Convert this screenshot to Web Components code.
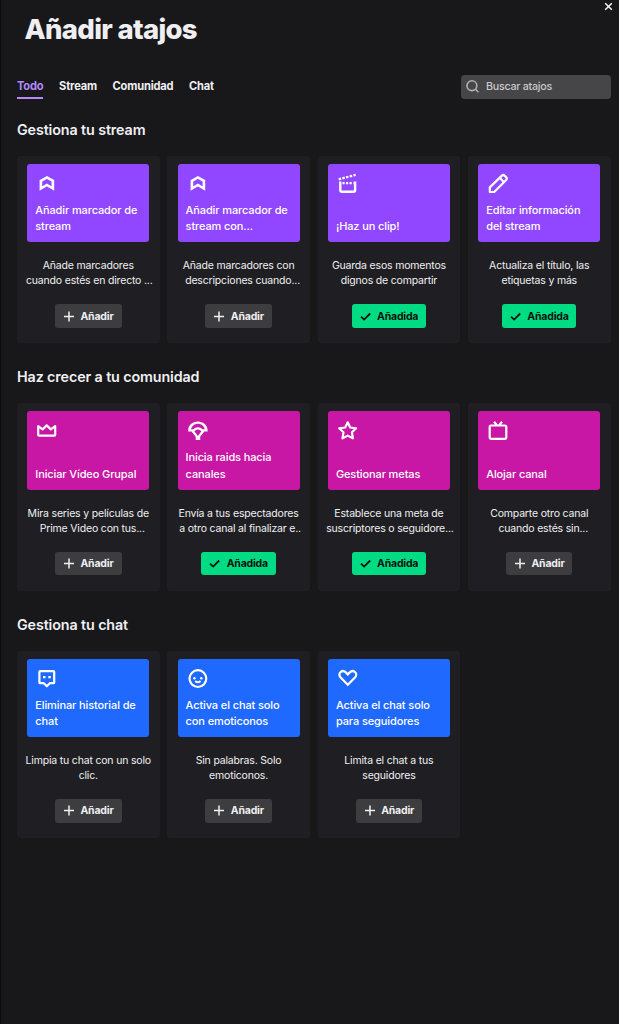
<!DOCTYPE html>
<html lang="es">
<head>
<meta charset="utf-8">
<title>Añadir atajos</title>
<style>
html,body{margin:0;background:#18181b}
body{font-family:Inter,"Liberation Sans",sans-serif;color:#efeff1;height:1024px;overflow:hidden}
</style>
</head>
<body>
<shortcut-dialog>
  <dialog-tabs slot="tabs"></dialog-tabs>
  <search-box slot="search"></search-box>
  <shortcut-section heading="Gestiona tu stream" style="--tile:#9147ff">
    <shortcut-card icon="bookmark" name="Añadir marcador de|stream" text="Añade marcadores|cuando estés en directo ..." style="--shift:2px"></shortcut-card>
    <shortcut-card icon="bookmark" name="Añadir marcador de|stream con..." text="Añade marcadores con|descripciones cuando..." style="--shift:8px"></shortcut-card>
    <shortcut-card icon="clip" name="¡Haz un clip!" text="Guarda esos momentos|dignos de compartir" added></shortcut-card>
    <shortcut-card icon="pencil" name="Editar información|del stream" text="Actualiza el título, las|etiquetas y más" added></shortcut-card>
  </shortcut-section>
  <shortcut-section heading="Haz crecer a tu comunidad" style="--tile:#c816a5">
    <shortcut-card icon="crown" name="Iniciar Vídeo Grupal" text="Mira series y películas de|Prime Video con tus..." style="--shift:8px"></shortcut-card>
    <shortcut-card icon="raid" name="Inicia raids hacia|canales" text="Envía a tus espectadores|a otro canal al finalizar e.." added style="--shift:3px"></shortcut-card>
    <shortcut-card icon="star" name="Gestionar metas" text="Establece una meta de|suscriptores o seguidore..." added style="--shift:2px"></shortcut-card>
    <shortcut-card icon="tv" name="Alojar canal" text="Comparte otro canal|cuando estés sin..." style="--shift:8px"></shortcut-card>
  </shortcut-section>
  <shortcut-section heading="Gestiona tu chat" style="--tile:#1f69ff">
    <shortcut-card icon="chat" name="Eliminar historial de|chat" text="Limpia tu chat con un solo|clic."></shortcut-card>
    <shortcut-card icon="smile" name="Activa el chat solo|con emoticonos" text="Sin palabras. Solo|emoticonos."></shortcut-card>
    <shortcut-card icon="heart" name="Activa el chat solo|para seguidores" text="Limita el chat a tus|seguidores"></shortcut-card>
  </shortcut-section>
</shortcut-dialog>
<script>
const S = 'fill="none" stroke="#fff"';
const ICONS = {
  bookmark: `<path ${S} stroke-width="2.600" d="M3.900 7.800 9.900 4.400 15.900 7.800v7.700l-6-3.500-6 3.500z"/>`,
  clip: `<path ${S} stroke-width="2.400" d="M2.300 8.500v9.100q0 1.200 1.200 1.200h12.400q1.200 0 1.200-1.200V8.500"/><path ${S} stroke-width="2.200" stroke-dasharray="2.200 1.300" d="M4.500 10.100h11"/><path ${S} stroke-width="2.300" stroke-dasharray="2.500 1.300" d="M.7 6.300 17.600 1.900"/>`,
  pencil: `<path ${S} stroke-linejoin="round" d="M1.800 19v-4.600L13.900 2.600q1.300-1.200 2.600 0l1.700 1.700q1.200 1.300 0 2.600L6.200 19z"/><path ${S} d="m11.600 4.800 4.500 4.500"/>`,
  crown: `<path ${S} stroke-linejoin="round" d="M1.200 6.100v8.600q0 .9.900.9h15.200q.9 0 .9-.9V6.100l-4.400 3.300-4.100-4-4.100 4z"/>`,
  raid: `<path fill="#fff" fill-rule="evenodd" d="M.2 11.600V10.400C.2 5 4.400 1.400 9.900 1.400s9.700 3.600 9.700 9v1.200h-3.300l-4.100 5.200V20H7.700v-3.200L3.500 11.600zM3 9.200h2.200Q7 7.300 9.900 7.300t4.700 1.900h2.200C15.900 5.800 13.200 3.700 9.900 3.700S3.900 5.800 3 9.200zM6.400 11.200 9.900 16l3.500-4.800Q11.900 9.600 9.900 9.600T6.400 11.200z"/>`,
  star: `<path ${S} stroke-linejoin="round" d="m9.700 2.300 2.500 5.200 6 .8-4.300 4 1 6.100-5.200-2.800-5.200 2.800 1-6.100-4.300-4 6-.8z"/>`,
  tv: `<path ${S} d="M2.900 5.500h13.900q1.500 0 1.500 1.500v10.300q0 1.500-1.500 1.500H2.900q-1.200 0-1.200-1.500V7q0-1.500 1.200-1.500zM6.100 1.800l3 3.600M14 1.800l-3 3.600"/>`,
  chat: `<path ${S} stroke-linejoin="round" d="M3.200 3.100h13.200q.8 0 .8.800v10.500q0 .8-.8.800h-3.600l-3 3.100-3-3.100H3.200q-.8 0-.8-.8V3.900q0-.8.800-.8z"/><path fill="#fff" d="M6 7.900h2.500v2.400H6zm5.300 0h2.500v2.400h-2.500z"/>`,
  smile: `<circle cx="9.900" cy="10.600" r="8.400" ${S}/><circle cx="6.400" cy="10.300" r="1.250" fill="#fff"/><circle cx="13.300" cy="10.300" r="1.250" fill="#fff"/><path ${S} stroke-width="2" d="M7.200 13q2.700 2.500 5.400 0"/>`,
  heart: `<path ${S} d="M9.800 16.800 2.600 9.500C.9 7.700 1 5.300 2.600 4c1.600-1.400 3.700-1.100 5.200.4l2 2 2-2c1.500-1.500 3.600-1.800 5.200-.4C18.600 5.300 18.700 7.700 17 9.500z"/>`
};
const PLUS = '<svg width="11" height="11" viewBox="0 0 11 11"><path d="M6 .5v10M1 5.500h10" stroke="currentColor" stroke-width="1.500"/></svg>';
const CHECK = '<svg width="11" height="11" viewBox="0 0 11 11"><path d="m1 5.700 3.100 2.900L10.200 2.500" fill="none" stroke="currentColor" stroke-width="1.800"/></svg>';
class Base extends HTMLElement {
  connectedCallback(){ if(!this.shadowRoot) this.attachShadow({mode:'open'}).innerHTML=this.view(); }
}
customElements.define('shortcut-dialog', class extends Base { view(){ return `<style>
:host{display:block;position:relative;box-sizing:border-box;height:1024px;padding:13px 8.500px 0 17px;background:linear-gradient(90deg,#0c0c0e 1.500px,transparent 1.500px)}
h1{margin:0 0 0 7.500px;font-size:27.500px;line-height:33px;font-weight:760;letter-spacing:-.68px;white-space:nowrap}
.bar{display:flex;justify-content:space-between;margin-top:29px;height:24px}
main{display:flex;flex-direction:column;gap:25px;margin-top:22px}
.close{position:absolute;right:6px;top:2px;width:9px;height:9px}
</style><h1>Añadir atajos</h1><svg class="close" viewBox="0 0 9 9"><path d="m1.200 1.200 6.600 6.600m0-6.600L1.200 7.800" stroke="#efeff1" stroke-width="1.600"/></svg>
<div class="bar"><slot name="tabs"></slot><slot name="search"></slot></div><main><slot></slot></main>`}});
customElements.define('dialog-tabs', class extends Base { view(){ return `<style>
:host{display:flex;gap:15.700px;font-size:11.100px;line-height:16px;font-weight:650;letter-spacing:-.18px;height:24px}
span{padding-top:3px;height:19px;white-space:nowrap}
.on{color:#b588ff;border-bottom:2px solid #b588ff}
</style><span class="on">Todo</span><span>Stream</span><span>Comunidad</span><span>Chat</span>`}});
customElements.define('search-box', class extends Base { view(){ return `<style>
:host{display:flex;align-items:center;box-sizing:border-box;width:149.500px;height:23.500px;padding-left:5px;gap:7px;border-radius:4px;background:#464649;color:#c8c8cc;font-size:10.700px;font-weight:450;letter-spacing:-.25px}
svg{flex:none;width:13px;height:13px}
</style><svg viewBox="0 0 13 13"><circle cx="5.900" cy="5.700" r="4.900" fill="none" stroke="#b0b0b6" stroke-width="1.600"/><path d="m9.500 9.300 3 3" stroke="#b0b0b6" stroke-width="1.600"/></svg><span>Buscar atajos</span>`}});
customElements.define('shortcut-section', class extends Base { view(){ return `<style>
:host{display:block}
h2{margin:0 0 17px;font-size:14.300px;line-height:18px;font-weight:620;letter-spacing:-.11px;white-space:nowrap}
div{display:grid;grid-template-columns:repeat(4,1fr);gap:7.800px}
</style><h2>${this.getAttribute('heading')}</h2><div><slot></slot></div>`}});
customElements.define('add-button', class extends Base { view(){ const on=this.hasAttribute('added'); return `<style>
:host{display:flex;align-items:center;justify-content:center;gap:6.500px;width:66.500px;height:23.600px;border-radius:3px;background:#3d3d40;color:#efeff1;font-size:10.500px;line-height:14px;font-weight:700;letter-spacing:-.2px}
:host([added]){width:74.300px;background:#00db84;color:#07130e}
span{padding-top:1px}
</style>${on?CHECK:PLUS}<span>${on?'Añadida':'Añadir'}</span>`}});
customElements.define('shortcut-card', class extends Base { view(){
const name=this.getAttribute('name').split('|').map(t=>`<span>${t}</span>`).join('');
const text=this.getAttribute('text').split('|').map(t=>`<span>${t}</span>`).join('');
return `<style>
:host{display:flex;flex-direction:column;align-items:center;box-sizing:border-box;height:187.400px;padding-top:8px;border-radius:3px;background:#1f1f23}
.tile{display:flex;flex-direction:column;justify-content:space-between;box-sizing:border-box;width:122px;height:78.200px;padding:9px 8px 7.600px;border-radius:3px;background:var(--tile);color:#fff}
.tile svg{width:20px;height:20px;margin-left:2px;overflow:visible;stroke-width:2.200}
.name span{display:block;white-space:nowrap;font-size:11px;font-weight:500;line-height:16.400px;letter-spacing:-.11px}
.text{display:flex;flex-direction:column;align-items:center;margin:17.100px 0 15.300px;font-size:10.500px;line-height:14.900px;letter-spacing:-.18px}
.text span{white-space:nowrap}
.text span:last-child{padding-left:var(--shift,0px)}
</style><div class="tile"><svg viewBox="0 0 20 20">${ICONS[this.getAttribute('icon')]}</svg><div class="name">${name}</div></div>
<div class="text">${text}</div><add-button ${this.hasAttribute('added')?'added':''}></add-button>`}});
</script>
</body>
</html>
